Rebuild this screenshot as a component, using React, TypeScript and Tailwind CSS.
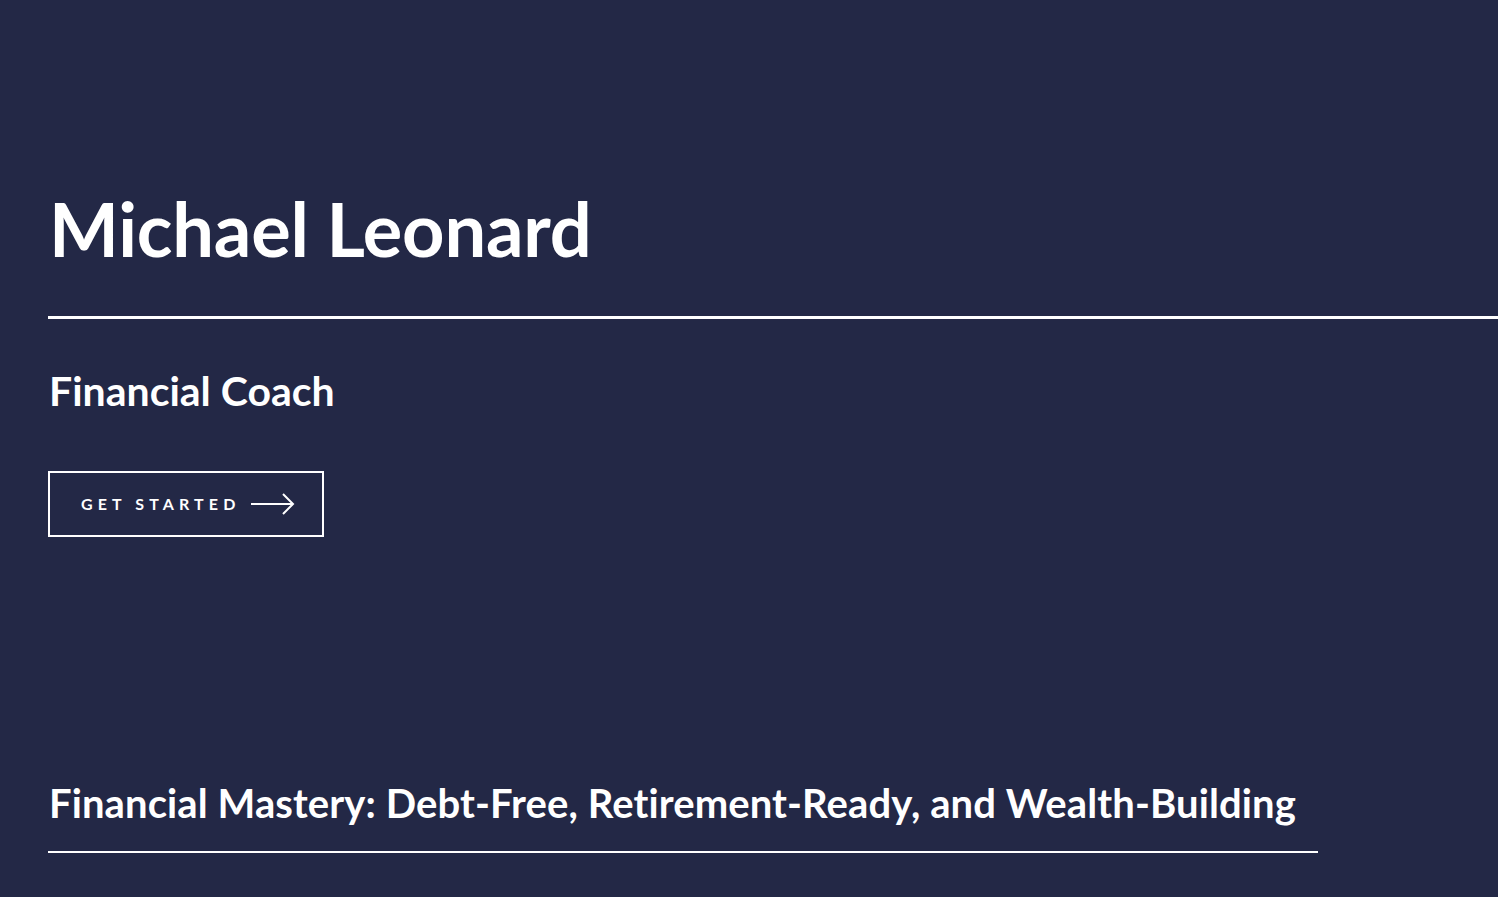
import React from 'react';

const ArrowRight: React.FC = () => (
  <svg width="46" height="22" viewBox="0 0 46 22" fill="none" stroke="currentColor" strokeWidth="2">
    <path d="M1 11h42" />
    <path d="M33 1l10 10-10 10" />
  </svg>
);

const App: React.FC = () => {
  return (
    <div className="min-h-[897px] w-full bg-[#232846] text-white overflow-hidden font-['Lato','Liberation_Sans',sans-serif]">
      <section className="pl-12 pt-[184px]">
        {/* Name */}
        <h1 className="pl-[1px] text-[74px] leading-[90px] font-bold tracking-[-0.2px]">Michael Leonard</h1>
        <div className="mt-[42px] h-[3px] w-full bg-white" />

        {/* Role */}
        <h2 className="mt-[47px] pl-[1px] text-[41px] leading-[50px] font-bold">Financial Coach</h2>

        {/* CTA */}
        <button className="mt-[55px] flex h-[66px] w-[276px] items-center gap-[10px] border-2 border-white pl-[31px] text-[16px] font-bold uppercase tracking-[0.32em]">
          Get Started
          <ArrowRight />
        </button>
      </section>

      {/* Headline */}
      <section className="pl-12 pt-[241px]">
        <div className="w-[1270px]">
          <h2 className="pl-[1px] text-[40px] leading-[50px] font-bold tracking-[0.1px]">
            Financial Mastery: Debt-Free, Retirement-Ready, and Wealth-Building
          </h2>
          <div className="mt-[23px] h-[2px] w-full bg-white" />
        </div>
      </section>
    </div>
  );
};

export default App;
